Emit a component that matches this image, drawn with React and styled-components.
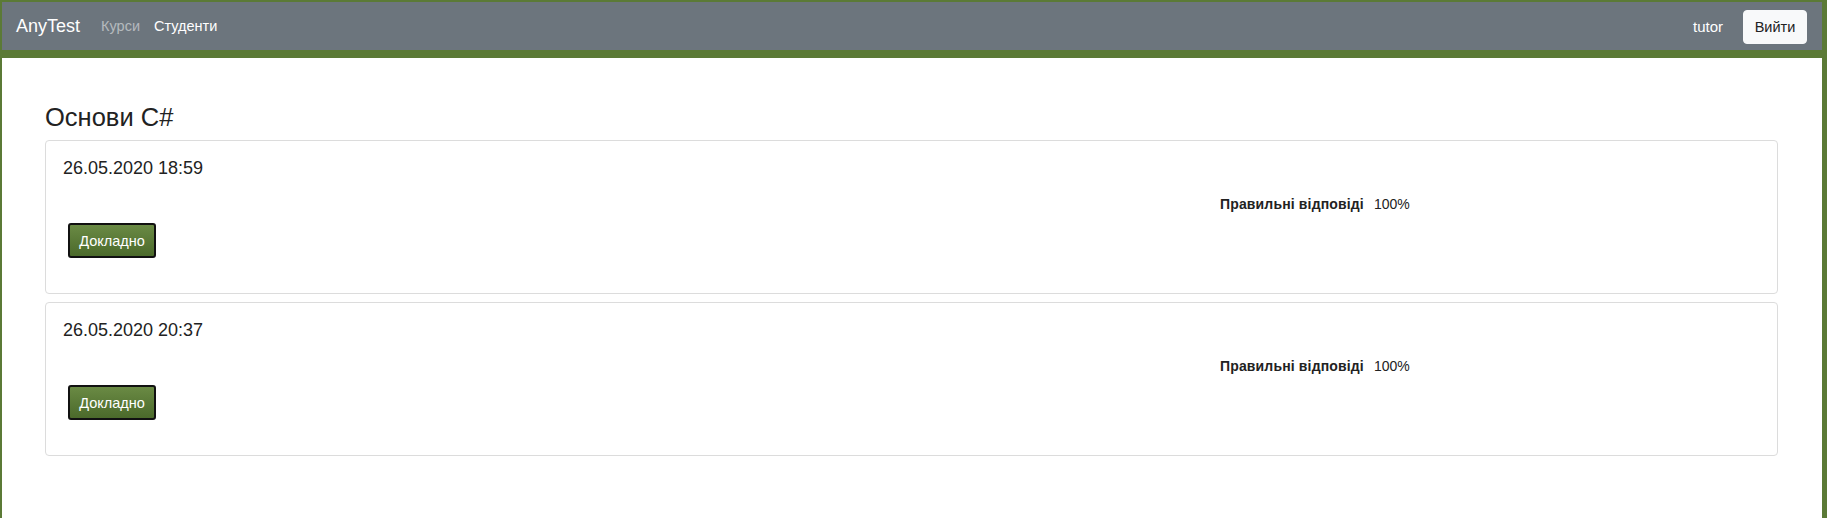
import React from "react";
import styled, { createGlobalStyle } from "styled-components";

const Global = createGlobalStyle`
  html, body { margin: 0; padding: 0; background: #fff; }
  body { font-family: "Liberation Sans", Arial, sans-serif; color: #222; }
`;

const Frame = styled.div`
  min-height: 100vh;
  box-sizing: border-box;
  border-top: 2px solid #5b7a36;
  border-left: 2px solid #5b7a36;
  border-right: 5px solid #5b7a36;
  background: #fff;
`;

const Navbar = styled.nav`
  height: 48px;
  background: #6c757d;
  border-bottom: 8px solid #5b7a36;
  display: flex;
  align-items: center;
  justify-content: space-between;
  padding: 0 15px 0 14px;
`;

const NavLeft = styled.div`
  display: flex;
  align-items: center;
`;

const Brand = styled.span`
  font-size: 18px;
  color: #fff;
  margin-right: 14px;
`;

const NavLink = styled.span`
  font-size: 14.5px;
  padding: 0 7px;
  color: ${(p) => (p.$active ? "#fff" : "rgba(255,255,255,0.5)")};
`;

const NavRight = styled.div`
  display: flex;
  align-items: center;
  gap: 20px;
`;

const User = styled.span`
  color: #fff;
  font-size: 15px;
`;

const LogoutButton = styled.button`
  font-family: inherit;
  font-size: 14.5px;
  color: #222;
  background: #f8f9fa;
  border: 1px solid #f8f9fa;
  border-radius: 4px;
  height: 34px;
  width: 64px;
  padding: 0;
  margin-top: 2px;
`;

const Content = styled.main`
  padding: 0 44px 0 43px;
`;

const Title = styled.h2`
  font-size: 25.5px;
  font-weight: 400;
  line-height: 29px;
  margin: 45px 0 8px;
  color: #222;
`;

const Card = styled.section`
  border: 1px solid #dcdcdc;
  border-radius: 4px;
  height: 154px;
  box-sizing: border-box;
  padding: 16px 17px 0;
  margin-bottom: 8px;
`;

const DateLine = styled.div`
  font-size: 18px;
  line-height: 22px;
  color: #222;
`;

const Stats = styled.div`
  font-size: 14px;
  line-height: 18px;
  margin-top: 16px;
  padding-left: 1157px;
  white-space: nowrap;
`;

const StatLabel = styled.b`
  letter-spacing: 0.15px;
  margin-right: 10px;
`;

const DetailsButton = styled.button`
  font-family: inherit;
  font-size: 14.5px;
  color: #fff;
  height: 35px;
  width: 88px;
  margin: 10px 0 0 5px;
  padding: 0;
  border: 2px solid #111;
  border-radius: 3px;
  background: linear-gradient(#6a8a44, #4b6a2b);
`;

const results = [
  { date: "26.05.2020 18:59", score: "100%" },
  { date: "26.05.2020 20:37", score: "100%" },
];

export default function App() {
  return (
    <>
      <Global />
      <Frame>
        <Navbar>
          <NavLeft>
            <Brand>AnyTest</Brand>
            <NavLink>Курси</NavLink>
            <NavLink $active>Студенти</NavLink>
          </NavLeft>
          <NavRight>
            <User>tutor</User>
            <LogoutButton>Вийти</LogoutButton>
          </NavRight>
        </Navbar>
        <Content>
          <Title>Основи C#</Title>
          {results.map((r) => (
            <Card key={r.date}>
              <DateLine>{r.date}</DateLine>
              <Stats>
                <StatLabel>Правильні відповіді</StatLabel>
                {r.score}
              </Stats>
              <DetailsButton>Докладно</DetailsButton>
            </Card>
          ))}
        </Content>
      </Frame>
    </>
  );
}
